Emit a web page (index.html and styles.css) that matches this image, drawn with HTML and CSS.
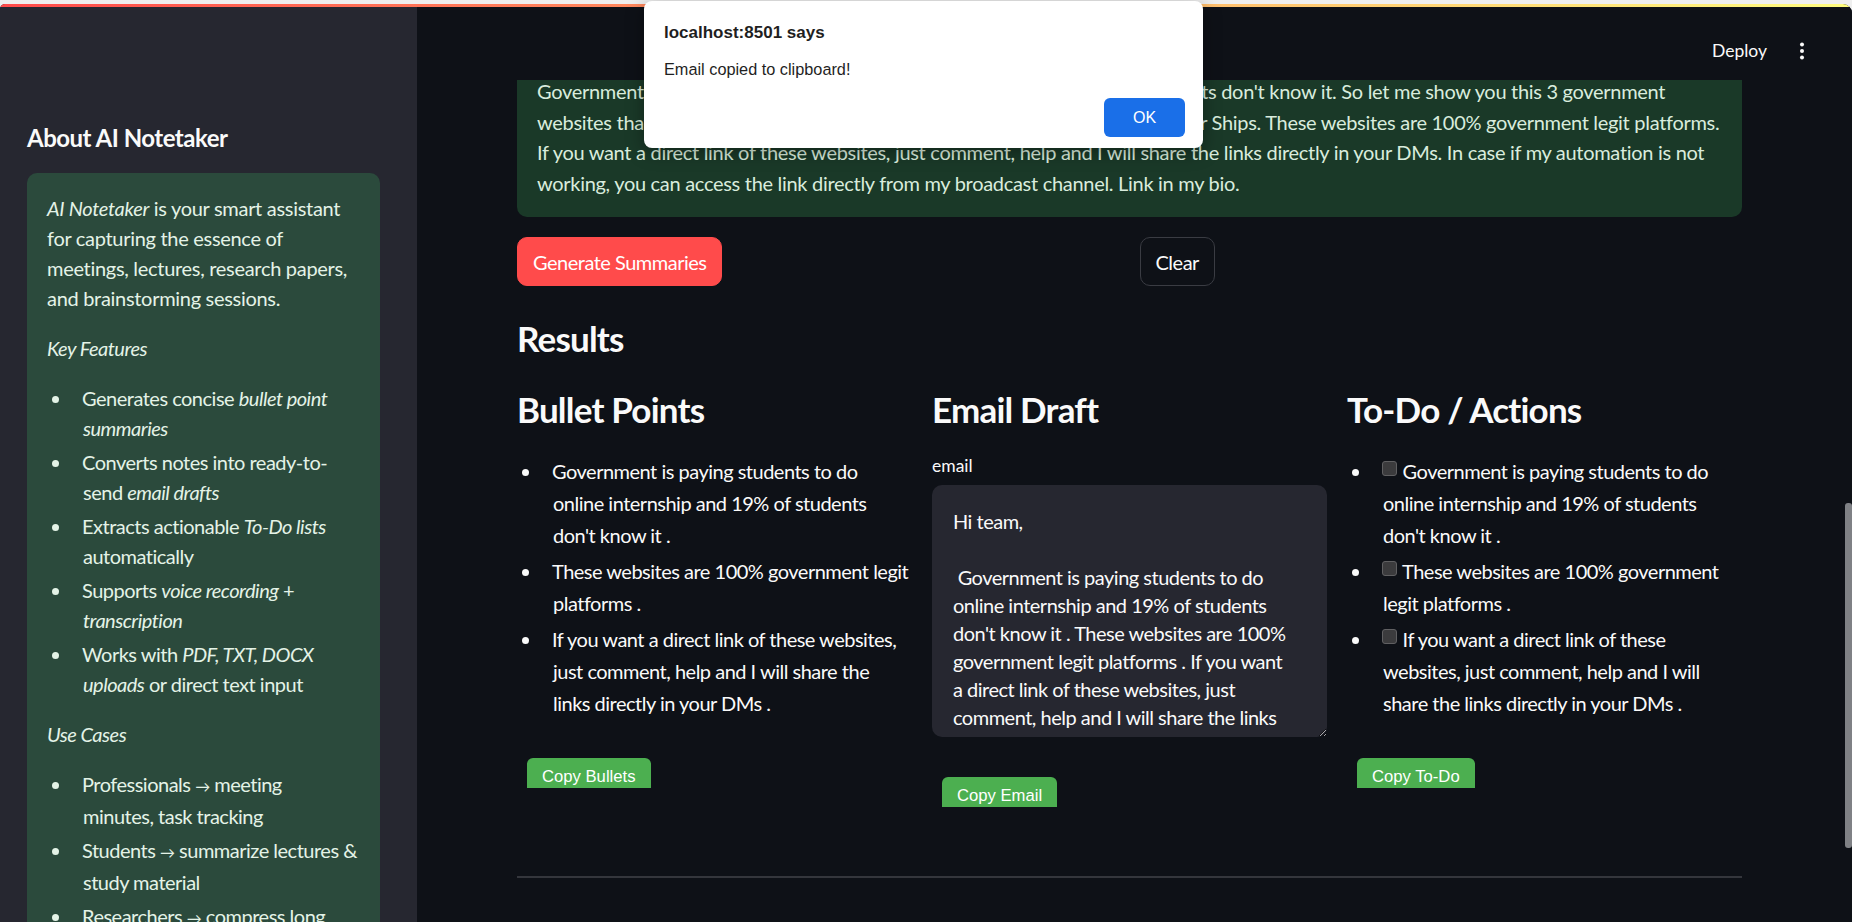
FILE: index.html
```html
<!DOCTYPE html>
<html lang="en">
<head>
<meta charset="utf-8">
<title>AI Notetaker</title>
<link rel="stylesheet" href="styles.css">
</head>
<body>
<div class="window">
  <div class="decoration"></div>
  <div class="app">
    <aside class="sidebar">
      <h3 class="side-title">About AI Notetaker</h3>
      <div class="about-card">
        <p class="intro"><em>AI Notetaker</em> is your smart assistant for capturing the essence of meetings, lectures, research papers, and brainstorming sessions.</p>
        <p><em>Key Features</em></p>
        <ul class="dot-list">
          <li>Generates concise <em>bullet point summaries</em></li>
          <li>Converts notes into ready-to-send <em>email drafts</em></li>
          <li>Extracts actionable <em>To-Do lists</em> automatically</li>
          <li>Supports <em>voice recording</em> + <em>transcription</em></li>
          <li>Works with <em>PDF, TXT, DOCX uploads</em> or direct text input</li>
        </ul>
        <p><em>Use Cases</em></p>
        <ul class="dot-list">
          <li>Professionals <span class="arrow">→</span> meeting minutes,&nbsp;task tracking</li>
          <li>Students <span class="arrow">→</span> summarize lectures &amp; study material</li>
          <li>Researchers <span class="arrow">→</span> compress long papers into key insights</li>
          <li>Teams <span class="arrow">→</span> share action items after brainstorming</li>
        </ul>
      </div>
    </aside>
    <div class="main">
      <div class="main-col">
        <header class="topbar">
          <span class="deploy">Deploy</span>
          <svg class="kebab" width="6" height="18" viewBox="0 0 6 18"><circle cx="3" cy="2.5" r="2" fill="#fafafa"/><circle cx="3" cy="9" r="2" fill="#fafafa"/><circle cx="3" cy="15.5" r="2" fill="#fafafa"/></svg>
        </header>
        <div class="viewport">
          <div class="content">
            <div class="input-preview">Government is paying students to do online internships and 19% of the students don't know it. So let me show you this 3 government<br>websites that pay you for doing online internships and also give you the Scholar Ships. These websites are 100% government legit platforms.<br>If you want a direct link of these websites, just comment, help and I will share the links directly in your DMs. In case if my automation is not<br>working, you can access the link directly from my broadcast channel. Link in my bio.</div>
            <div class="btn-row">
              <div><button class="btn-primary">Generate Summaries</button></div>
              <div><button class="btn-secondary">Clear</button></div>
            </div>
            <h3 class="section-title">Results</h3>
            <div class="results">
              <section class="col">
                <h3 class="col-title">Bullet Points</h3>
                <ul class="out-list dot-list narrow">
                  <li>Government is paying students to do online internship and 19% of students don't know it .</li>
                  <li>These websites are 100% government legit platforms .</li>
                  <li>If you want a direct link of these websites, just comment, help and I will share the links directly in your DMs .</li>
                </ul>
                <div class="copy-frame"><button class="copy-btn">Copy Bullets</button></div>
              </section>
              <section class="col">
                <h3 class="col-title">Email Draft</h3>
                <label class="field-label" for="email">email</label>
                <textarea id="email" class="email-box">Hi team,

 Government is paying students to do online internship and 19% of students don't know it . These websites are 100% government legit platforms . If you want a direct link of these websites, just comment, help and I will share the links directly in your DMs .

Best regards,
[Your Name]</textarea>
                <div class="copy-frame email-frame"><button class="copy-btn">Copy Email</button></div>
              </section>
              <section class="col">
                <h3 class="col-title">To-Do / Actions</h3>
                <ul class="out-list dot-list">
                  <li><input type="checkbox" class="todo-check"> Government is paying students to do online internship and 19% of students don't know it .</li>
                  <li><input type="checkbox" class="todo-check"> These websites are 100% government legit platforms .</li>
                  <li><input type="checkbox" class="todo-check"> If you want a direct link of these websites, just comment, help and I will share the links directly in your DMs .</li>
                </ul>
                <div class="copy-frame"><button class="copy-btn">Copy To-Do</button></div>
              </section>
            </div>
            <hr class="divider">
          </div>
        </div>
      </div>
      <div class="scrollbar"><div class="thumb"></div></div>
    </div>
  </div>
</div>
<div class="dialog" role="alertdialog">
  <div class="dialog-title">localhost:8501 says</div>
  <div class="dialog-msg">Email copied to clipboard!</div>
  <button class="dialog-ok">OK</button>
</div>
</body>
</html>
```

FILE: styles.css
```css
* { box-sizing: border-box; }
html, body { margin: 0; height: 100%; }
body {
  position: relative;
  background: #efefef;
  font-family: "Lato", "Noto Sans", sans-serif;
  overflow: hidden;
}
.window {
  margin-top: 4px;
  height: 918px;
  border-radius: 5px 9px 0 0;
  overflow: hidden;
  background: #0e1117;
}
.decoration {
  height: 3px;
  background: linear-gradient(90deg, #ff4b4b, #fffd80);
}
.app { display: flex; height: 915px; }

/* shared bullet lists */
.dot-list { list-style: none; }
.dot-list li::before {
  content: "";
  display: inline-block;
  width: 7px;
  height: 7px;
  border-radius: 50%;
  background: currentColor;
  margin: 0 23px 0 -31px;
  vertical-align: 3px;
}

/* sidebar */
.sidebar {
  width: 417px;
  flex: none;
  background: #262730;
  padding: 116px 37px 0 27px;
  overflow: hidden;
  color: #fafafa;
}
.side-title {
  margin: 0 0 20px;
  font-size: 24px;
  font-weight: 700;
  line-height: 30px;
  letter-spacing: -0.5px;
}
.about-card {
  background: #2b4a3c;
  border-radius: 10px;
  padding: 20px 17px 20px 20px;
  color: #e4f3e7;
  font-size: 20px;
  line-height: 30px;
  letter-spacing: -0.5px;
}
.about-card p { margin: 0 0 20px; }
.about-card .intro { letter-spacing: -0.3px; }
.about-card ul { margin: 0 0 20px; padding-left: 36px; }
.about-card li + li { margin-top: 4px; }
.arrow { font-size: 15px; }

/* main */
.main { flex: 1; display: flex; background: #0e1117; min-width: 0; }
.main-col { flex: 1; display: flex; flex-direction: column; min-width: 0; }
.topbar {
  height: 73px;
  flex: none;
  display: flex;
  justify-content: flex-end;
  align-items: flex-start;
  gap: 32px;
  padding: 33px 38px 0 0;
  color: #fafafa;
}
.deploy { font-size: 17.5px; line-height: 22px; }
.kebab { display: block; margin-top: 2px; }
.viewport { flex: 1; overflow: hidden; }
.content {
  margin-top: -24px;
  padding: 0 101px 0 100px;
  color: #fafafa;
  font-size: 20px;
  letter-spacing: -0.5px;
}
.input-preview {
  background: #1a3928;
  color: #d9ecdd;
  border-radius: 10px;
  padding: 20px 20px 19px;
  line-height: 30.5px;
  letter-spacing: -0.3px;
  white-space: nowrap;
  overflow: hidden;
}
.btn-row {
  display: grid;
  grid-template-columns: 1fr 1fr;
  gap: 20px;
  margin-top: 20px;
}
.btn-primary, .btn-secondary {
  height: 49px;
  border-radius: 10px;
  padding: 0 15px;
  font: 20px "Lato", sans-serif;
  letter-spacing: -0.5px;
  color: #fff;
}
.btn-primary { background: #ff4b4b; border: 1px solid #ff4b4b; }
.btn-secondary { background: #0e1117; border: 1px solid #3a3c43; color: #fafafa; }
.section-title, .col-title {
  margin: 0;
  font-size: 35px;
  line-height: 42px;
  font-weight: 700;
  letter-spacing: -0.8px;
}
.section-title { margin-top: 31px; }
.results {
  display: grid;
  grid-template-columns: repeat(3, 1fr);
  gap: 20px;
  margin-top: 29px;
}
.col { display: flex; flex-direction: column; min-width: 0; }
.out-list {
  margin: 25px 0 0;
  padding-left: 36px;
  line-height: 32px;
}
.out-list.narrow { padding-right: 2px; }
.out-list li + li { margin-top: 4px; }
.todo-check {
  appearance: none;
  -webkit-appearance: none;
  width: 15px;
  height: 15px;
  margin: 0 1px 0 0;
  background: #3b3b3d;
  border: 1px solid #606062;
  border-radius: 3px;
  vertical-align: 3px;
}
.field-label {
  margin-top: 25px;
  font-size: 17.5px;
  line-height: 22px;
  height: 22px;
  letter-spacing: 0;
}
.email-box {
  display: block;
  width: 100%;
  height: 252px;
  margin-top: 8px;
  background: #262730;
  color: #fafafa;
  border: none;
  border-radius: 10px;
  padding: 22px 34px 0 21px;
  font: 20px/28px "Lato", sans-serif;
  letter-spacing: -0.5px;
  resize: vertical;
  overflow: hidden;
  outline: none;
  color-scheme: dark;
}
.copy-frame {
  height: 40px;
  overflow: hidden;
  padding: 10px;
  margin-top: 29px;
  letter-spacing: 0;
}
.email-frame { margin-top: 30px; }
.copy-btn {
  background: #4caf50;
  color: #fff;
  border: none;
  border-radius: 6px;
  padding: 9px 15px;
  font: 16.67px "Liberation Sans", Arial, sans-serif;
}
.divider {
  margin: 69px 0 0;
  border: none;
  border-top: 2px solid #34363c;
}

/* scrollbar */
.scrollbar { width: 9px; flex: none; }
.thumb {
  margin: 496px 0 0 2px;
  width: 7px;
  height: 345px;
  background: #7f8185;
  border-radius: 3px;
}

/* alert dialog */
.dialog {
  position: absolute;
  left: 644px;
  top: 1px;
  width: 559px;
  height: 147px;
  background: #fff;
  border-radius: 8px;
  box-shadow: 0 4px 18px rgba(0, 0, 0, 0.35);
  padding: 21px 18px 0 20px;
  display: flex;
  flex-direction: column;
  font-family: "Liberation Sans", Arial, sans-serif;
  color: #1f1f1f;
}
.dialog-title { font-size: 17px; font-weight: 700; line-height: 22px; }
.dialog-msg { margin-top: 15px; font-size: 16.3px; line-height: 20px; }
.dialog-ok {
  align-self: flex-end;
  margin-top: 19px;
  width: 81px;
  height: 39px;
  border: none;
  border-radius: 6px;
  background: #1a6fe8;
  color: #fff;
  font: 16px "Liberation Sans", Arial, sans-serif;
}
```
